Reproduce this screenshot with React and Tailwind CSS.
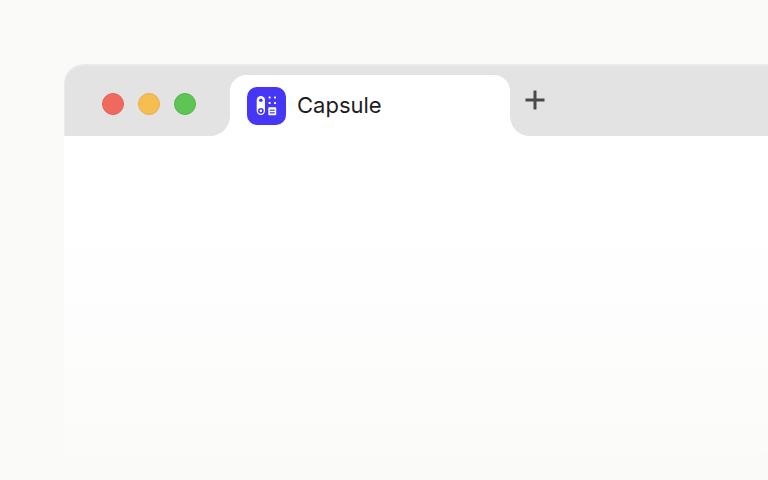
function AppIcon() {
  return (
    <svg width="39" height="38" viewBox="0 0 39 38" fill="none">
      <rect width="39" height="38" rx="10" fill="#4636f6" />
      <rect x="9.7" y="9" width="8.3" height="19" rx="4.15" fill="#fff" />
      <circle cx="13.85" cy="13.2" r="1.8" fill="#4636f6" />
      <circle cx="13.85" cy="23.8" r="2.9" fill="#4636f6" />
      <circle cx="13.85" cy="23.8" r="1.3" fill="#fff" />
      <rect x="21.6" y="9.6" width="2" height="2" rx="0.5" fill="#fff" />
      <rect x="27" y="9.6" width="2" height="2" rx="0.5" fill="#fff" />
      <rect x="21.6" y="15" width="2" height="2" rx="0.5" fill="#fff" />
      <rect x="27" y="15" width="2" height="2" rx="0.5" fill="#fff" />
      <rect x="21.3" y="20.3" width="7.9" height="7.9" rx="0.8" fill="#fff" />
      <rect x="22.8" y="22.6" width="4.9" height="1.2" fill="#4636f6" />
      <rect x="22.8" y="25.2" width="4.9" height="1.2" fill="#4636f6" />
    </svg>
  );
}

function Dot({ className }) {
  return <span className={`size-[22px] rounded-full border ${className}`} />;
}

export default function App() {
  return (
    <div className="h-[480px] w-[768px] overflow-hidden bg-[#fafaf8] pl-[64px] pt-[64px] font-['Inter',sans-serif]">
      <div className="flex h-[390px] flex-col rounded-tl-[20px] bg-gradient-to-b from-white from-[40%] to-[#fbfbfa]">
        <div className="flex h-[72px] shrink-0">
          <div className="flex w-[166px] items-center gap-[14px] rounded-tl-[20px] rounded-br-[20px] border-l border-t-2 border-[#e9e9e8] bg-[#e3e3e3] pl-[37px] pt-[5px]">
            <Dot className="border-[#e35f58] bg-[#f0695f]" />
            <Dot className="border-[#ebae4a] bg-[#f6bd50]" />
            <Dot className="border-[#4fb548] bg-[#5ec454]" />
          </div>
          <div className="w-[280px] border-t-2 border-[#e9e9e8] bg-[#e3e3e3] pt-[9px]">
            <div className="flex h-[61px] items-start gap-[11px] rounded-t-[16px] bg-white pl-[17px] pt-[12px]">
              <AppIcon />
              <span className="text-[22px] leading-[37px] text-[#1d1d1f]">Capsule</span>
            </div>
          </div>
          <div className="flex flex-1 items-center rounded-bl-[20px] border-t-2 border-[#e9e9e8] bg-[#e3e3e3] pl-[15px]">
            <svg width="20" height="20" viewBox="0 0 20 20" fill="none" className="mt-[-2px]">
              <path d="M10 0.5v19M0.5 10h19" stroke="#4a4a4a" strokeWidth="3" />
            </svg>
          </div>
        </div>
      </div>
    </div>
  );
}
